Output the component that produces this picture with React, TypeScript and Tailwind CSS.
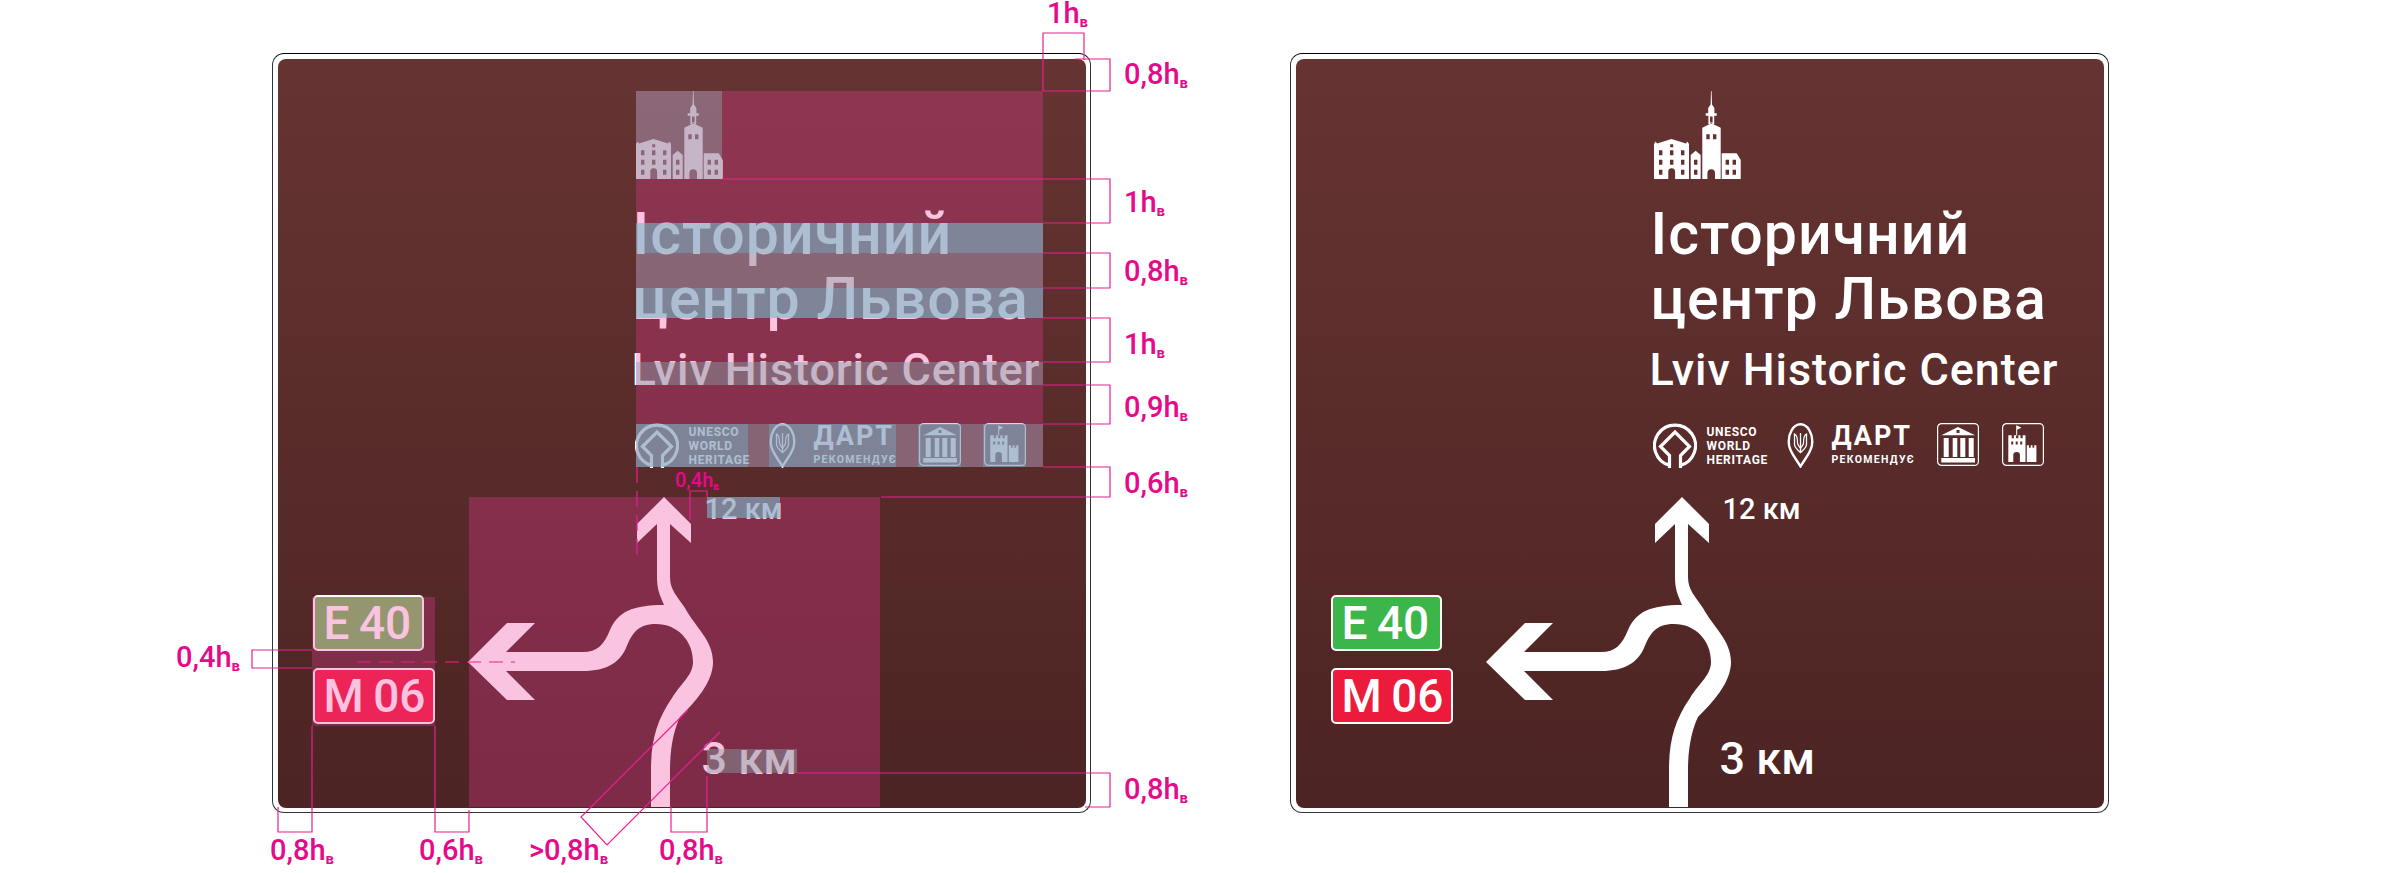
// Road sign: annotated layout scheme on the left, clean sign on the right
const hole = (x: number, y: number, w = 3.4, h = 5) => `M${x - w / 2} ${y - h / 2}h${w}v${h}h${-w}z`;
const arch = (x: number, w: number, y: number, bottom = 88) =>
  `M${x} ${bottom}V${y + w / 2}a${w / 2} ${w / 2} 0 0 1 ${w} 0V${bottom}z`;

function TownIcon() {
  const d = [
    // left building
    "M0 88V53L1.5 50.5L3 52.5L17.5 48L32 52.5L33.5 50.5L35 53V88z",
    arch(14.3, 6.8, 77.3),
    ...[6.7, 28.7].flatMap((x) => [61.7, 71.3, 81.3].map((y) => hole(x, y))),
    hole(17.7, 54.7, 3, 3),
    hole(17.7, 61.7),
    hole(17.7, 71.3),
    // small middle house
    "M36.7 88V64L41.7 59.7L46.7 64V88z",
    hole(41.7, 71.3),
    hole(41.7, 81.3),
    // tower
    "M48.3 88V36.7L57.3 32.3L66.7 36.7V88z",
    arch(53.4, 7.6, 78.3),
    hole(54, 45.7),
    hole(60.7, 45.7),
    // lantern
    "M54.2 22.3V17L56.6 13.5L57 0H57.6L58 13.5L60.4 17V22.3H62.7V24.7H60.2V33H54.4V24.7H51.7V22.3z",
    hole(57.3, 28.5, 2.6, 6),
    // right house
    "M67.7 88V62.3H82.7L86.7 69V88z",
    hole(73.3, 71.3),
    hole(80.3, 71.3),
    hole(73.3, 81.3),
    hole(80.3, 81.3),
  ].join("");
  return (
    <svg viewBox="0 0 87 88" className="block h-[88px] w-[87px]">
      <path d={d} fill="#fff" fillRule="evenodd" />
    </svg>
  );
}

function UnescoIcon() {
  return (
    <svg viewBox="0 0 44 45" className="block h-[45px] w-[44px] shrink-0">
      <path d="M16.5 42.3A20.5 20.5 0 1 1 27.5 42.3" fill="none" stroke="#fff" strokeWidth="3.2" />
      <path d="M16.5 45V32.5L7.5 23.5L22 9L36.5 23.5L27.5 32.5V45" fill="none" stroke="#fff" strokeWidth="3.2" />
    </svg>
  );
}

function PinIcon() {
  return (
    <svg viewBox="0 0 27 45" className="block h-[45px] w-[27px] shrink-0">
      <path
        d="M13.5 43.5C10 37 4 31 2.2 23C0 10 7 1.3 13.5 1.3C20 1.3 27 10 24.8 23C23 31 17 37 13.5 43.5Z"
        fill="none"
        stroke="#fff"
        strokeWidth="2.4"
      />
      <g fill="none" stroke="#fff" strokeWidth="1.3">
        <path d="M13.5 10V30" />
        <path d="M7.5 11V21C7.5 25 10.5 26.5 13.5 29.5C16.5 26.5 19.5 25 19.5 21V11C17 12 16.5 16 16.5 20C16.5 22 15 23 13.5 25.5C12 23 10.5 22 10.5 20C10.5 16 10 12 7.5 11Z" />
      </g>
    </svg>
  );
}

function MuseumIcon() {
  return (
    <svg viewBox="0 0 42 43" className="block h-[43px] w-[42px] shrink-0">
      <rect x=".6" y=".6" width="40.8" height="41.8" rx="4" fill="none" stroke="#fff" strokeWidth="1.2" />
      <path
        fill="#fff"
        fillRule="evenodd"
        d={
          "M21 4L38 12.3H4.3Z" +
          hole(21, 8.6, 3, 3) +
          "M6.7 15h5v19h-5zM15.7 15h4.6v19h-4.6zM23.3 15h5v19h-5zM31.7 15h5v19h-5zM4.3 35h33.7v4.4H4.3z"
        }
      />
    </svg>
  );
}

function FortIcon() {
  return (
    <svg viewBox="0 0 42 43" className="block h-[43px] w-[42px] shrink-0">
      <rect x=".6" y=".6" width="40.8" height="41.8" rx="4" fill="none" stroke="#fff" strokeWidth="1.2" />
      <path d="M14.7 12.5V2.5" stroke="#fff" strokeWidth="1" />
      <path d="M15 2.5L19.5 4.8L15 6.8Z" fill="#fff" />
      <path
        fill="#fff"
        fillRule="evenodd"
        d={
          "M6.3 39V12.3h3.4v3h2.2v-3h2.2v3h2.2v-3h2.2v3h2.2v-3h2.8V39z" +
          arch(11.3, 6.6, 29, 39) +
          hole(10.2, 20, 2, 3) +
          hole(14.7, 20, 2, 3) +
          hole(19.2, 20, 2, 3) +
          "M24.8 39V22.3h2.2v2.4h1.7v-2.4h1.8v2.4h1.7v-2.4h2.2V39z"
        }
      />
    </svg>
  );
}

function RoadDiagram() {
  return (
    <svg viewBox="1484 497 250 310" className="block h-[310px] w-[250px] shrink-0">
      <path
        fill="#fff"
        d="M1682 497L1709 524V543L1688 524V577C1688 590 1695 596 1703 608C1713 627 1731 640 1731 662C1731 683 1712 703 1698 717C1693 727 1688 745 1688 770V807H1669V770C1669 740 1675 720 1690 698C1700 682 1711 675 1711 662C1711 640 1695 624 1674 624C1655 624 1650 634 1644 648C1638 662 1625 671 1601 671H1524L1553 700H1525L1486 662L1525 623H1553L1524 652H1601C1615 652 1622 645 1628 630C1636 612 1650 605 1682 605C1678 595 1675 590 1675 577V524L1655 543V524Z"
      />
    </svg>
  );
}

function RoutePlate({ label, className }: { label: string; className: string }) {
  return (
    <div
      className={`flex h-[56px] items-center rounded-[5px] border-2 border-white pl-[9px] text-[46px] leading-none font-medium [word-spacing:-2px] text-white ${className}`}
    >
      {label}
    </div>
  );
}

function Sign({ greenPlate }: { greenPlate: string }) {
  return (
    <div className="h-[760px] w-[819px] shrink-0 rounded-[12px] border-[1.5px] border-[#333] border-t-black p-[4.5px]">
      <div className="flex h-full flex-col overflow-hidden rounded-[8px] bg-linear-to-b from-[#663432] to-[#4c2423] pt-[32px] text-white">
        <div className="pl-[358px]">
          <TownIcon />
          <h2 className="mt-[22px] -ml-[3px] text-[59px] leading-[65px] font-medium tracking-[1px]">
            Історичний
            <br />
            центр Львова
          </h2>
          <p className="mt-[14px] -ml-[4px] text-[45px] leading-[50px] font-medium tracking-[0.9px]">Lviv Historic Center</p>
          <div className="mt-[28px] -ml-[1px] flex h-[45px] items-start">
            <UnescoIcon />
            <div className="ml-[10px] w-[80px] shrink-0 pt-[2px] text-[12px] leading-[14px] font-bold tracking-[0.7px]">
              UNESCO
              <br />
              WORLD
              <br />
              HERITAGE
            </div>
            <PinIcon />
            <div className="ml-[18px] w-[87px] shrink-0 pt-[1px]">
              <div className="text-[27px] leading-[25px] font-bold tracking-[2px]">ДАРТ</div>
              <div className="mt-[5px] text-[10.5px] leading-[12px] font-bold tracking-[1.3px]">РЕКОМЕНДУЄ</div>
            </div>
            <div className="ml-[18px]">
              <MuseumIcon />
            </div>
            <div className="ml-[23px]">
              <FortIcon />
            </div>
          </div>
        </div>
        <div className="mt-[29px] flex pl-[35px]">
          <div className="w-[122px] shrink-0 pt-[98px]">
            <RoutePlate label="E 40" className={`w-[111px] ${greenPlate}`} />
            <RoutePlate label="M 06" className="mt-[17px] w-[122px] bg-[#ed1b3b]" />
          </div>
          <div className="relative ml-[31px]">
            <RoadDiagram />
            <span className="absolute top-[-3px] left-[239px] text-[29px] leading-[30px] font-medium whitespace-nowrap">
              12 км
            </span>
            <span className="absolute top-[239px] left-[236px] text-[45px] leading-[45px] font-medium whitespace-nowrap">
              3 км
            </span>
          </div>
        </div>
      </div>
    </div>
  );
}

function Dim({ value, className }: { value: string; className: string }) {
  return (
    <span className={`absolute text-[29px] font-medium whitespace-nowrap text-[#e6098a] ${className}`}>
      {value}
      <span className="align-[-4px] text-[15px] font-bold">в</span>
    </span>
  );
}

const zones = [
  "left-[636px] top-[91px] h-[376px] w-[407px]",
  "left-[469px] top-[497px] h-[310px] w-[411px]",
  "left-[312px] top-[597px] h-[129px] w-[123px]",
];

const greyBands = [
  "left-[636px] top-[91px] h-[88px] w-[86px]",
  "left-[636px] top-[253px] h-[35px] w-[407px]",
  "left-[636px] top-[362px] h-[23px] w-[407px]",
  "left-[748px] top-[424px] h-[43px] w-[21px]",
  "left-[896px] top-[424px] h-[43px] w-[22px]",
  "left-[961px] top-[424px] h-[43px] w-[22px]",
  "left-[1026px] top-[424px] h-[43px] w-[17px]",
  "left-[707px] top-[749px] h-[24px] w-[90px]",
];

const blueBands = [
  "left-[636px] top-[223px] h-[30px] w-[407px]",
  "left-[636px] top-[288px] h-[30px] w-[407px]",
  "left-[636px] top-[424px] h-[43px] w-[112px]",
  "left-[769px] top-[424px] h-[43px] w-[127px]",
  "left-[918px] top-[424px] h-[43px] w-[43px]",
  "left-[983px] top-[424px] h-[43px] w-[43px]",
  "left-[707px] top-[497px] h-[21px] w-[73px]",
];

const leaderLines = [
  "M1043 91V33H1084V60",
  "M1075 59H1110V91H1043",
  "M722 179H1110V223H1043",
  "M1043 253H1110V288H1043",
  "M1043 318H1110V362H1043",
  "M1043 385H1110V424H1043",
  "M1043 467H1110V497H881",
  "M797 773H1110V807H1085",
  "M278 807V832H312V726",
  "M435 726V832H469V810",
  "M671 807V832H707V776",
  "M688 710L581 817L607 845L720 732",
  "M312 650H252V668H312",
  "M690 520V491H707V497",
];

export default function App() {
  return (
    <div className="relative h-[873px] w-[2382px] overflow-hidden bg-white font-['Roboto',sans-serif]">
      <div className="flex gap-[199px] pt-[53px] pl-[272px]">
        <Sign greenPlate="bg-[#6ebd5e]" />
        <Sign greenPlate="bg-[#3cb54a]" />
      </div>

      {/* clearance areas drawn over the left sign */}
      {zones.map((c) => (
        <div key={c} className={`absolute bg-[#f03c9d]/30 ${c}`} />
      ))}
      {greyBands.map((c) => (
        <div key={c} className={`absolute bg-[#87a3a6]/45 ${c}`} />
      ))}
      {blueBands.map((c) => (
        <div key={c} className={`absolute bg-[#79baca]/60 ${c}`} />
      ))}

      <svg viewBox="0 0 2382 873" className="pointer-events-none absolute inset-0 h-[873px] w-[2382px]">
        <g fill="none" stroke="#e8208f" strokeWidth="1.2">
          {leaderLines.map((d) => (
            <path key={d} d={d} />
          ))}
          <path d="M357 662H515" strokeDasharray="14 8" />
          <path d="M637 467V562" strokeDasharray="16 8" />
        </g>
      </svg>

      <Dim value="1h" className="top-[1px] left-[1047px] leading-[25px]" />
      <Dim value="0,8h" className="top-[60px] left-[1124px] leading-[29px]" />
      <Dim value="1h" className="top-[188px] left-[1124px] leading-[29px]" />
      <Dim value="0,8h" className="top-[257px] left-[1124px] leading-[29px]" />
      <Dim value="1h" className="top-[330px] left-[1124px] leading-[29px]" />
      <Dim value="0,9h" className="top-[393px] left-[1124px] leading-[29px]" />
      <Dim value="0,6h" className="top-[469px] left-[1124px] leading-[29px]" />
      <Dim value="0,8h" className="top-[775px] left-[1124px] leading-[29px]" />
      <Dim value="0,4h" className="top-[643px] left-[176px] leading-[29px]" />
      <Dim value="0,8h" className="top-[836px] left-[270px] leading-[29px]" />
      <Dim value="0,6h" className="top-[836px] left-[419px] leading-[29px]" />
      <Dim value=">0,8h" className="top-[836px] left-[529px] leading-[29px]" />
      <Dim value="0,8h" className="top-[836px] left-[659px] leading-[29px]" />
      <span className="absolute top-[470px] left-[675px] text-[20px] leading-[20px] font-medium whitespace-nowrap text-[#e6098a]">
        0,4h<span className="align-[-3px] text-[10px] font-bold">в</span>
      </span>
    </div>
  );
}
